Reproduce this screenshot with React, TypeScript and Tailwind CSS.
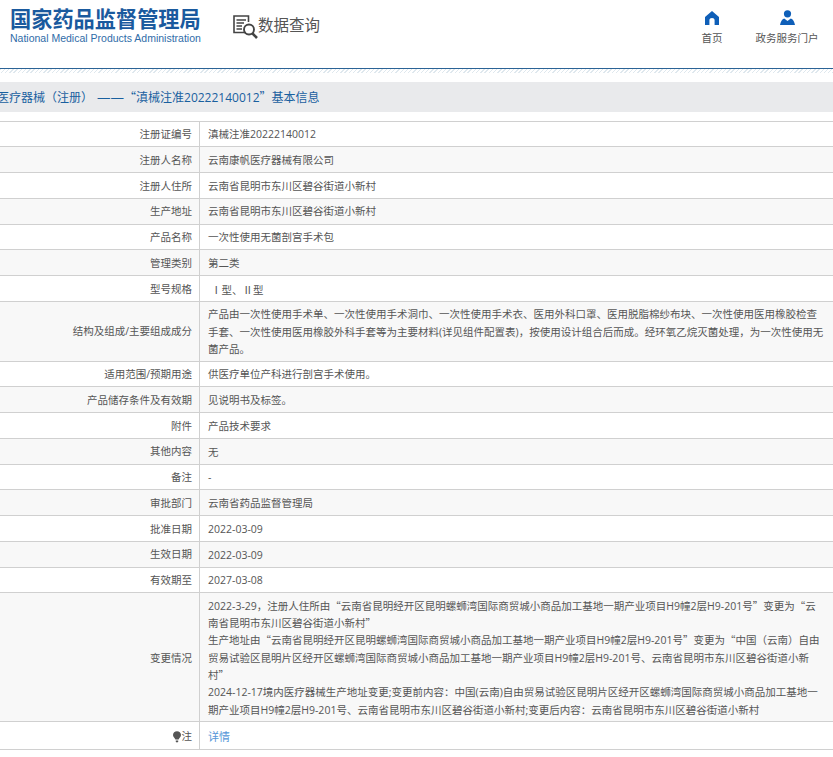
const FONT = "font-['Open_Sans','Noto_Sans_CJK_SC',sans-serif]";

// full-width punctuation, Open Sans draws these too narrow
function Q({ children }: { children: React.ReactNode }) {
  return <span className="font-['Noto_Sans_CJK_SC',sans-serif] leading-[0]">{children}</span>;
}

const ROWS: { label: string; value: React.ReactNode }[] = [
  { label: "注册证编号", value: "滇械注准20222140012" },
  { label: "注册人名称", value: "云南康帆医疗器械有限公司" },
  { label: "注册人住所", value: "云南省昆明市东川区碧谷街道小新村" },
  { label: "生产地址", value: "云南省昆明市东川区碧谷街道小新村" },
  { label: "产品名称", value: "一次性使用无菌剖宫手术包" },
  { label: "管理类别", value: "第二类" },
  { label: "型号规格", value: <span className="pl-[3px] font-['Noto_Sans_CJK_SC',sans-serif]">Ⅰ型、Ⅱ型</span> },
  {
    label: "结构及组成/主要组成成分",
    value:
      "产品由一次性使用手术单、一次性使用手术洞巾、一次性使用手术衣、医用外科口罩、医用脱脂棉纱布块、一次性使用医用橡胶检查手套、一次性使用医用橡胶外科手套等为主要材料(详见组件配置表)，按使用设计组合后而成。经环氧乙烷灭菌处理，为一次性使用无菌产品。",
  },
  { label: "适用范围/预期用途", value: "供医疗单位产科进行剖宫手术使用。" },
  { label: "产品储存条件及有效期", value: "见说明书及标签。" },
  { label: "附件", value: "产品技术要求" },
  { label: "其他内容", value: "无" },
  { label: "备注", value: "-" },
  { label: "审批部门", value: "云南省药品监督管理局" },
  { label: "批准日期", value: "2022-03-09" },
  { label: "生效日期", value: "2022-03-09" },
  { label: "有效期至", value: "2027-03-08" },
  {
    label: "变更情况",
    value: (
      <div>
        2022-3-29，注册人住所由<Q>“</Q>云南省昆明经开区昆明螺蛳湾国际商贸城小商品加工基地一期产业项目H9幢2层H9-201号<Q>”</Q>变更为<Q>“</Q>云
        <br />
        南省昆明市东川区碧谷街道小新村<Q>”</Q>
        <br />
        生产地址由<Q>“</Q>云南省昆明经开区昆明螺蛳湾国际商贸城小商品加工基地一期产业项目H9幢2层H9-201号<Q>”</Q>变更为<Q>“</Q>中国（云南）自由
        <br />
        贸易试验区昆明片区经开区螺蛳湾国际商贸城小商品加工基地一期产业项目H9幢2层H9-201号、云南省昆明市东川区碧谷街道小新
        <br />
        村<Q>”</Q>
        <br />
        2024-12-17境内医疗器械生产地址变更;变更前内容：中国(云南)自由贸易试验区昆明片区经开区螺蛳湾国际商贸城小商品加工基地一
        <br />
        期产业项目H9幢2层H9-201号、云南省昆明市东川区碧谷街道小新村;变更后内容：云南省昆明市东川区碧谷街道小新村
      </div>
    ),
  },
];

function SearchDocIcon() {
  return (
    <svg width="26" height="24" viewBox="0 0 26 24" fill="none" stroke="#444" className="shrink-0">
      <path d="M13 17.5H1V1H15.5V7" strokeWidth="1.6" />
      <path d="M3.5 5H13M3.5 8H11M3.5 11H9M3.5 14H9" strokeWidth="1.3" />
      <circle cx="16" cy="14.5" r="5" strokeWidth="1.9" />
      <path d="M19.5 18.5L24 23" strokeWidth="2.6" />
    </svg>
  );
}

function HomeIcon() {
  return (
    <svg width="14" height="14" viewBox="0 0 14 14" fill="#0f5fb8">
      <path d="M7 0L14 6V14H9.6V9.2C9.6 7.8 8.5 7 7 7C5.5 7 4.4 7.8 4.4 9.2V14H0V6Z" />
    </svg>
  );
}

function UserIcon() {
  return (
    <svg width="15" height="15" viewBox="0 0 15 15" fill="#0f5fb8">
      <circle cx="7.5" cy="3.8" r="3.6" />
      <path d="M4.2 8.4L7.5 11L10.8 8.4C13 8.8 14.4 11.5 15 15H0C0.6 11.5 2 8.8 4.2 8.4Z" />
    </svg>
  );
}

function BulbIcon() {
  return (
    <svg width="8" height="12" viewBox="0 0 8 12" fill="#555" className="shrink-0">
      <path d="M4 0.2C6.2 0.2 8 1.9 8 4C8 5.8 6.4 6.6 5.6 8.6H2.4C1.6 6.6 0 5.8 0 4C0 1.9 1.8 0.2 4 0.2Z" />
      <path d="M2.8 9.4H5.2V10.6L4 11.8L2.8 10.6Z" />
    </svg>
  );
}

function Row({ label, value, shaded }: { label: React.ReactNode; value: React.ReactNode; shaded: boolean }) {
  return (
    <div
      className={`grid min-h-[25.75px] grid-cols-[200px_1fr] border-b border-[#d0d0d0] ${shaded ? "bg-[#f8f8f8]" : "bg-white"}`}
    >
      <div className="flex items-center justify-end border-r border-[#d0d0d0] pr-[7px] pt-[2px] text-[#555]">{label}</div>
      <div className="flex items-center pb-[2.5px] pl-[8px] pr-[7px] pt-[4.5px] leading-[17.3px] text-[#555]">{value}</div>
    </div>
  );
}

export default function App() {
  return (
    <div className={`h-[757px] w-[833px] overflow-hidden bg-white text-[10.5px] ${FONT}`}>
      {/* Header */}
      <header className="flex h-[68px] items-start justify-between">
        <div className="flex">
          <div className="ml-[10px] w-[191px] pt-[6px]">
            <div className="whitespace-nowrap text-[21.2px] font-bold leading-[25px] text-[#1a5a9e]">国家药品监督管理局</div>
            <div className="mt-[1px] whitespace-nowrap font-['Liberation_Sans',sans-serif] text-[10.5px] leading-[13px] text-[#2f6ca8]">
              National Medical Products Administration
            </div>
          </div>
          <div className="ml-[32px] mt-[15px] flex items-start">
            <SearchDocIcon />
            <span className="-ml-[1px] -mt-[2px] text-[15.5px] leading-[24px] text-[#555]">数据查询</span>
          </div>
        </div>
        <nav className="flex pt-[11px] text-[#555]">
          <div className="flex w-[40px] flex-col items-center gap-[6px]">
            <HomeIcon />
            <span className="whitespace-nowrap leading-[14px]">首页</span>
          </div>
          <div className="-mt-[1px] ml-[23px] mr-[14px] flex w-[64px] flex-col items-center gap-[6px]">
            <UserIcon />
            <span className="whitespace-nowrap leading-[14px]">政务服务门户</span>
          </div>
        </nav>
      </header>

      {/* Blue rule with hatch */}
      <div className="h-[1px] bg-[#2b6396]" />
      <div className="h-[4px] bg-[repeating-linear-gradient(135deg,#dfe8ee_0,#dfe8ee_1px,#ffffff_1px,#ffffff_3px)]" />

      {/* Title */}
      <div className="mt-[9px] flex h-[29.5px] items-center overflow-hidden bg-[#e9eaec]">
        <span className="-ml-[3px] whitespace-nowrap text-[12px] text-[#19609f]">
          医疗器械（注册）<span className="ml-[4px] text-[13.5px]">——</span>
          <Q>“</Q>滇械注准20222140012<Q>”</Q>基本信息
        </span>
      </div>

      {/* Details */}
      <div className="mt-[9px] border-t border-[#d0d0d0]">
        {ROWS.map((row, index) => (
          <Row key={row.label} label={row.label} value={row.value} shaded={index % 2 === 1} />
        ))}
        <Row
          shaded={false}
          label={
            <span className="flex items-center gap-[1px]">
              <BulbIcon />注
            </span>
          }
          value={<span className="text-[11px] leading-[19.5px] text-[#5596d8]">详情</span>}
        />
      </div>
    </div>
  );
}
